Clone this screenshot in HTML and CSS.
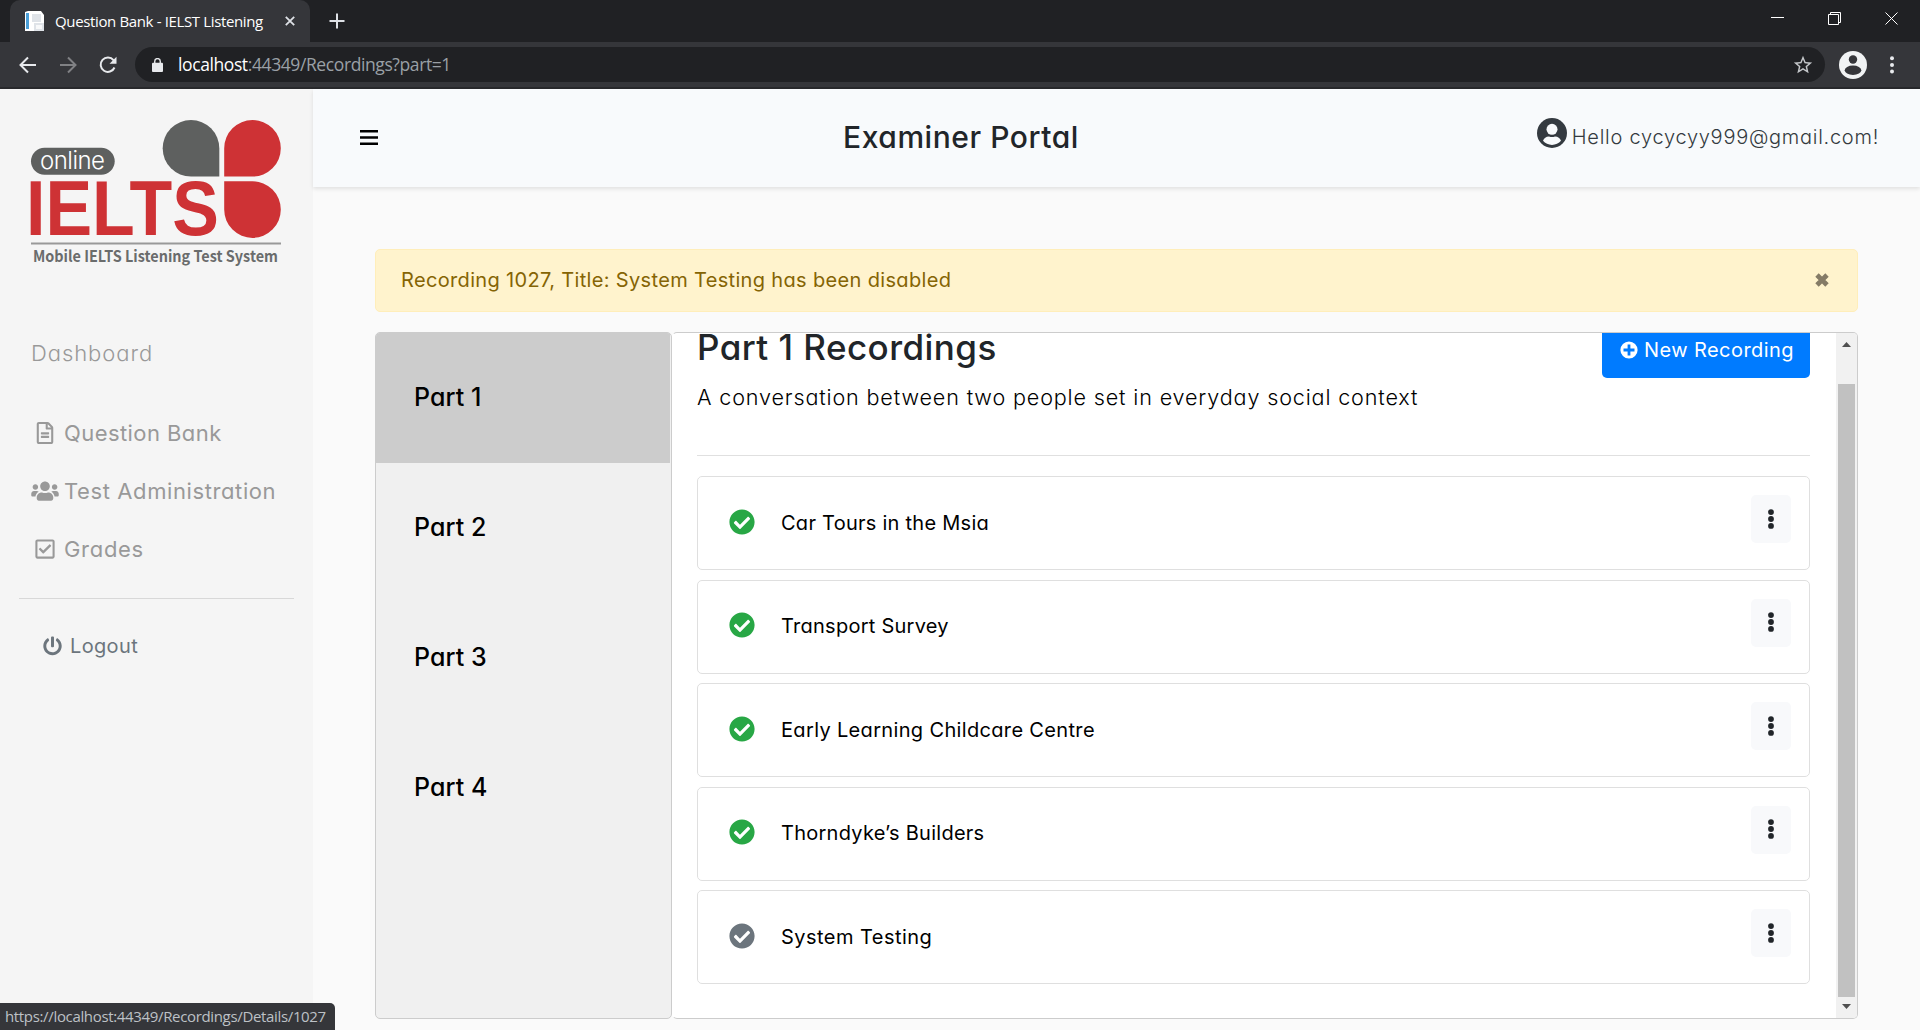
FILE: index.html
```html
<!DOCTYPE html>
<html lang="en">
<head>
<meta charset="utf-8">
<title>Question Bank - IELST Listening</title>
<link rel="stylesheet" href="styles.css">
</head>
<body>
<svg class="defs" aria-hidden="true">
  <symbol id="check-circle" viewBox="0 0 512 512"><path d="M504 256c0 136.967-111.033 248-248 248S8 392.967 8 256 119.033 8 256 8s248 111.033 248 248zM227.314 387.314l184-184c6.248-6.248 6.248-16.379 0-22.627l-22.627-22.627c-6.248-6.249-16.379-6.249-22.628 0L216 308.118l-70.059-70.059c-6.248-6.248-16.379-6.248-22.628 0l-22.627 22.627c-6.248 6.248-6.248 16.379 0 22.627l104 104c6.249 6.249 16.379 6.249 22.628.001z"/></symbol>
  <symbol id="dots" viewBox="0 0 8 20"><circle cx="4" cy="3.1" r="2.9"/><circle cx="4" cy="10" r="2.9"/><circle cx="4" cy="16.9" r="2.9"/></symbol>
</svg>
<header class="browser">
  <div class="tabstrip">
    <div class="tab">
      <svg class="favicon" viewBox="0 0 20 20"><path fill="#fff" d="M0 1 3 0h13l3 4v16H0z"/><path fill="#4a9fd8" d="M1 2h3v16H1z"/><path fill="#dfe3e8" d="M7 3h9v8H7zM9 12h10v8H9z"/><path fill="#f8f9fa" d="M11 14h6v4h-6z"/></svg>
      <span class="tab-title">Question Bank - IELST Listening</span>
      <svg class="tab-close" viewBox="0 0 10 10"><path d="M.8.8l8.4 8.4M9.2.8.8 9.2"/></svg>
    </div>
    <svg class="plus" viewBox="0 0 16 16"><path d="M8 .5v15M.5 8h15"/></svg>
    <div class="window-buttons">
      <svg viewBox="0 0 14 14"><path d="M0 5.5h13"/></svg>
      <svg viewBox="0 0 14 14"><path d="M.5 2.5h10v10H.5zM2.5 2.5v-2h10v10h-2"/></svg>
      <svg viewBox="0 0 14 14"><path d="M.5.5l12 12M12.500.5l-12 12"/></svg>
    </div>
  </div>
  <div class="toolbar">
    <svg class="nav" viewBox="0 0 18 18"><path d="M17 9H2M9 1.500 1.500 9 9 16.500"/></svg>
    <svg class="nav dim" viewBox="0 0 18 18"><path d="M1 9h15M9 1.500 16.500 9 9 16.500"/></svg>
    <svg class="nav" viewBox="0 0 18 18"><path d="M15.500 11.500A7.200 7.200 0 1 1 14.500 4.200L16 6"/><path class="solid" d="M17.500.8v7h-7z"/></svg>
    <div class="address">
      <svg class="lock" viewBox="0 0 12 15"><path fill="#e8eaed" d="M1 5h10q1 0 1 1v8q0 1-1 1H1q-1 0-1-1V6q0-1 1-1z"/><path fill="none" stroke="#e8eaed" stroke-width="1.500" d="M3 6V3.500a3 3 0 0 1 6 0V6"/></svg>
      <span class="url"><b>localhost</b>:44349/Recordings?part=1</span>
      <svg class="star" viewBox="0 0 24 24"><path d="M22 9.240l-7.190-.62L12 2 9.190 8.630 2 9.240l5.460 4.730L5.820 21 12 17.270 18.180 21l-1.630-7.030L22 9.240zM12 15.400l-3.760 2.270 1-4.280-3.320-2.880 4.380-.38L12 6.100l1.710 4.040 4.380.38-3.320 2.880 1 4.280L12 15.400z"/></svg>
    </div>
    <svg class="profile" viewBox="0 0 28 28"><circle cx="14" cy="14" r="14" fill="#f1f3f4"/><circle cx="14" cy="8.500" r="4.200" fill="#35363a"/><ellipse cx="14" cy="19.300" rx="8.300" ry="4.700" fill="#35363a"/></svg>
    <svg class="kebab" viewBox="0 0 4 18"><circle cx="2" cy="2.300" r="2"/><circle cx="2" cy="9" r="2"/><circle cx="2" cy="15.500" r="2"/></svg>
  </div>
</header>

<div class="app">
  <aside class="sidebar">
    <svg class="logo" viewBox="0 0 250 146">
      <path fill="#5e605f" d="M160 0a28.300 28.300 0 0 1 28.300 28.300v28.300H160A28.300 28.300 0 0 1 160 0z"/>
      <path fill="#ce3235" d="M221.500 0a28.300 28.300 0 0 0-28.300 28.300v28.300h28.300a28.300 28.300 0 0 0 0-56.600zM193.200 61.300h28.300a28.300 28.300 0 1 1-28.300 28.300z"/>
      <rect x="0" y="27.700" width="83.700" height="27" rx="13.500" fill="#5e605f"/>
      <text class="logo-online" x="9" y="48.800" textLength="65">online</text>
      <text class="logo-name" x="-5" y="115.200" textLength="193" lengthAdjust="spacingAndGlyphs">IELTS</text>
      <path fill="#999" d="M0 122.500h250v2H0z"/>
      <text class="logo-tag" x="2" y="141.800" textLength="245" lengthAdjust="spacingAndGlyphs">Mobile IELTS Listening Test System</text>
    </svg>
    <nav class="menu">
      <a class="dashboard"><span>Dashboard</span></a>
      <a><svg class="menu-icon" viewBox="-64 0 512 512"><path d="M288 248v28c0 6.600-5.400 12-12 12H108c-6.600 0-12-5.400-12-12v-28c0-6.600 5.400-12 12-12h168c6.600 0 12 5.400 12 12zm-12 72H108c-6.600 0-12 5.400-12 12v28c0 6.600 5.400 12 12 12h168c6.600 0 12-5.400 12-12v-28c0-6.600-5.400-12-12-12zm108-188.100V464c0 26.500-21.500 48-48 48H48c-26.500 0-48-21.500-48-48V48C0 21.500 21.500 0 48 0h204.100C264.800 0 277 5.100 286 14.100L369.900 98c9 8.900 14.100 21.200 14.100 33.900zm-128-80V128h76.100L256 51.900zM336 464V176H232c-13.300 0-24-10.700-24-24V48H48v416h288z"/></svg><span class="l-question">Question Bank</span></a>
      <a><svg class="menu-icon" viewBox="0 0 640 512"><path d="M96 224c35.300 0 64-28.700 64-64s-28.700-64-64-64-64 28.700-64 64 28.700 64 64 64zm448 0c35.300 0 64-28.700 64-64s-28.700-64-64-64-64 28.700-64 64 28.700 64 64 64zm32 32h-64c-17.600 0-33.500 7.100-45.100 18.600 40.300 22.100 68.900 62 75.100 109.400h66c17.700 0 32-14.300 32-32v-32c0-35.300-28.700-64-64-64zm-256 0c61.900 0 112-50.100 112-112S381.900 32 320 32 208 82.100 208 144s50.100 112 112 112zm76.800 32h-8.300c-20.800 10-43.900 16-68.500 16s-47.600-6-68.500-16h-8.300C179.600 288 128 339.600 128 403.200V432c0 26.500 21.500 48 48 48h288c26.500 0 48-21.500 48-48v-28.800c0-63.600-51.600-115.200-115.200-115.200zm-223.700-13.400C161.500 263.100 145.600 256 128 256H64c-35.300 0-64 28.700-64 64v32c0 17.700 14.300 32 32 32h65.900c6.300-47.400 34.900-87.300 75.200-109.400z"/></svg><span class="l-test">Test Administration</span></a>
      <a><svg class="menu-icon" viewBox="-32 0 512 512"><path d="M400 32H48C21.490 32 0 53.490 0 80v352c0 26.510 21.490 48 48 48h352c26.510 0 48-21.490 48-48V80c0-26.510-21.490-48-48-48zm0 400H48V80h352v352zm-35.864-241.724L191.547 361.480c-4.705 4.667-12.303 4.637-16.970-.068l-90.781-91.516c-4.667-4.705-4.637-12.303.069-16.971l22.719-22.536c4.705-4.667 12.303-4.637 16.970.069l59.792 60.277 141.352-140.216c4.705-4.667 12.303-4.637 16.970.068l22.536 22.718c4.667 4.706 4.637 12.304-.068 16.971z"/></svg><span class="l-grades">Grades</span></a>
    </nav>
    <a class="logout"><svg viewBox="0 0 512 512"><path d="M400 54.100c63 45 104 118.600 104 201.900 0 136.800-110.800 247.700-247.500 248C120 504.300 8.200 393 8 256.400 7.900 173.100 48.900 99.300 111.800 54.200c11.700-8.300 28-4.800 35 7.700L162.600 90c5.900 10.500 3.100 23.800-6.600 31-41.500 30.800-68 79.600-68 134.900-.1 92.300 74.500 168.100 168 168.100 91.600 0 168.600-74.200 168-169.100-.3-51.800-24.700-101.800-68.100-134-9.700-7.200-12.400-20.500-6.500-30.900l15.800-28.100c7-12.400 23.200-16.100 34.800-7.800zM296 264V24c0-13.300-10.700-24-24-24h-32c-13.300 0-24 10.700-24 24v240c0 13.300 10.700 24 24 24h32c13.300 0 24-10.700 24-24z"/></svg><span>Logout</span></a>
  </aside>

  <div class="page">
    <header class="topbar">
      <svg class="burger" viewBox="0 0 18 15"><path d="M0 0h18v2.500H0zM0 6.200h18v2.500H0zM0 12.500h18V15H0z"/></svg>
      <h1>Examiner Portal</h1>
      <div class="user"><svg viewBox="0 0 30 30"><circle cx="15" cy="15" r="15"/><circle cx="15" cy="11.300" r="5.500" fill="#f8fafc"/><path fill="#f8fafc" d="M6 22.700q1.500-4 6-4.200 3 1 6 0 4.500.2 6 4.200a11.600 11.600 0 0 1-18 0z"/></svg><span>Hello cycycyy999@gmail.com!</span></div>
    </header>
    <main class="content">
      <div class="alert"><span>Recording 1027, Title: System Testing has been disabled</span><svg viewBox="0 0 14 14"><path d="M2 2l10 10M12 2 2 12"/></svg></div>
      <div class="panels">
        <nav class="parts">
          <a class="active"><span>Part 1</span></a>
          <a><span>Part 2</span></a>
          <a><span>Part 3</span></a>
          <a><span>Part 4</span></a>
        </nav>
        <section class="recordings">
          <div class="scroll-area">
            <div class="intro">
              <div>
                <h2>Part 1 Recordings</h2>
                <p>A conversation between two people set in everyday social context</p>
              </div>
              <a class="new"><svg viewBox="0 0 20 20"><circle cx="10" cy="10" r="10" fill="#fff"/><path d="M10 4.500v11M4.500 10h11"/></svg><span>New Recording</span></a>
            </div>
            <hr>
            <div class="list">
              <div class="card"><svg class="ok"><use href="#check-circle"/></svg><span>Car Tours in the Msia</span><i class="more"><svg><use href="#dots"/></svg></i></div>
              <div class="card"><svg class="ok"><use href="#check-circle"/></svg><span>Transport Survey</span><i class="more"><svg><use href="#dots"/></svg></i></div>
              <div class="card wide"><svg class="ok"><use href="#check-circle"/></svg><span>Early Learning Childcare Centre</span><i class="more"><svg><use href="#dots"/></svg></i></div>
              <div class="card"><svg class="ok"><use href="#check-circle"/></svg><span>Thorndyke’s Builders</span><i class="more"><svg><use href="#dots"/></svg></i></div>
              <div class="card wider"><svg class="ok off"><use href="#check-circle"/></svg><span>System Testing</span><i class="more"><svg><use href="#dots"/></svg></i></div>
            </div>
          </div>
          <div class="scrollbar">
            <svg viewBox="0 0 9 5"><path d="M0 5h9L4.500 0z"/></svg>
            <div class="thumb"></div>
            <svg viewBox="0 0 9 5"><path d="M0 0h9L4.500 5z"/></svg>
          </div>
        </section>
      </div>
    </main>
  </div>
</div>
<div class="status">https://localhost:44349/Recordings/Details/1027</div>
</body>
</html>
```
FILE: styles.css
```css
* { box-sizing: border-box; }
body { margin: 0; height: 1030px; overflow: hidden; display: flex; flex-direction: column; background: #fafafa; font-family: Inter, "Noto Sans", sans-serif; font-feature-settings: "cv11"; color: #212529; font-size: 20px; }
svg { display: block; flex: none; }
span, h1, h2, p { white-space: nowrap; }
.defs { position: absolute; width: 0; height: 0; }

/* Browser chrome */
.browser { flex: none; height: 89px; background: #35363a; border-bottom: 2px solid #28292c; font-family: "Open Sans", "Noto Sans", sans-serif; font-feature-settings: normal; }
.tabstrip { height: 42px; background: #202124; display: flex; align-items: center; padding-left: 10px; }
.tab { width: 300px; height: 42px; background: #35363a; border-radius: 10px 10px 0 0; display: flex; align-items: center; padding: 0 15px; color: #fff; font-size: 15px; letter-spacing: -.55px; }
.favicon { width: 20px; height: 20px; margin-right: 10px; }
.tab-title { width: 230px; letter-spacing: -.36px; padding-bottom: 1px; }
.tab-close { width: 10px; height: 10px; }
.tab-close path, .plus path { stroke: #dee1e6; stroke-width: 1.800; fill: none; }
.plus { width: 16px; height: 16px; margin-left: 19px; }
.plus path { stroke-width: 2; }
.window-buttons { margin-left: auto; padding: 0 21px 5px 0; display: flex; gap: 43px; }
.window-buttons svg { width: 14px; height: 14px; fill: none; stroke: #fff; stroke-width: 1; }
.toolbar { height: 45px; display: flex; align-items: center; padding-left: 19px; }
.nav { width: 18px; height: 18px; margin-right: 22px; fill: none; stroke: #e8eaed; stroke-width: 2; }
.nav .solid { fill: #e8eaed; stroke: none; }
.nav.dim { stroke: #808184; }
.address { width: 1690px; height: 35px; margin-left: -4px; border-radius: 18px; background: #202124; display: flex; align-items: center; padding: 0 11px 0 17px; font-size: 17.500px; color: #9aa0a6; }
.lock { width: 11px; height: 14px; margin-right: 15px; }
.url { letter-spacing: -.4px; padding-bottom: 1px; }
.url b { color: #fff; font-weight: 400; }
.star { width: 22px; height: 22px; margin-left: auto; fill: #c4c7ca; }
.profile { width: 28px; height: 28px; margin-left: 14px; }
.kebab { width: 4px; height: 18px; margin-left: 23px; fill: #e8eaed; }

/* Sidebar */
.app { flex: 1; display: flex; min-height: 0; }
.sidebar { width: 313px; flex: none; background: #f5f5f5; padding-top: 31px; }
.logo { width: 250px; height: 146px; margin-left: 31px; overflow: visible; }
.logo-online { font: 300 24px Inter, sans-serif; fill: #fff; }
.logo-name { font: bold 77px "Liberation Sans", sans-serif; fill: #ce3235; }
.logo-tag { font: bold 15.500px "Noto Sans CJK SC", sans-serif; fill: #6a6c6c; }
.menu { margin-left: 31px; color: #999; font-size: 22px; padding-top: 72px; }
.menu a { height: 58px; display: flex; align-items: center; gap: 5px; }
.menu .dashboard { height: 30px; margin-bottom: 36px; font-weight: 300; letter-spacing: .93px; }
.menu-icon { width: 28px; height: 22px; fill: #999; }
.l-question { letter-spacing: .43px; }
.l-test { letter-spacing: .6px; }
.l-grades { letter-spacing: .7px; }
.logout { display: flex; align-items: center; gap: 8px; height: 30px; margin: 53px 0 0 43px; color: #6c757d; letter-spacing: .35px; position: relative; }
.logout::before { content: ""; position: absolute; left: -24px; top: -33px; width: 275px; height: 1px; background: #d8d8d8; }
.logout svg { width: 19px; height: 20px; fill: #6c757d; }

/* Top bar */
.page { flex: 1; min-width: 0; }
.topbar { height: 98px; background: #f8fafc; box-shadow: 0 2px 4px rgba(0,0,0,.1); display: flex; align-items: center; padding: 0 41px 2px 47px; }
.burger { width: 18px; height: 15px; }
h1 { margin: 0 0 0 465px; font-size: 30px; font-weight: 500; letter-spacing: .56px; }
.user { margin-left: auto; display: flex; align-items: center; gap: 5px; font-weight: 300; color: #343a40; letter-spacing: .73px; }
.user svg { width: 30px; height: 30px; margin-top: -9px; fill: #343a40; }

/* Content */
.content { padding: 62px 62px 0; }
.alert { height: 63px; background: #fff3cd; border: 1px solid #ffeeba; border-radius: 5px; display: flex; align-items: center; justify-content: space-between; padding: 0 28px 2px 25px; color: #856404; letter-spacing: .34px; }
.alert svg { width: 14px; height: 14px; stroke: #857b66; stroke-width: 4.800; }
.panels { margin-top: 20px; height: 687px; display: flex; }
.parts { width: 297px; flex: none; border: 1px solid #ccc; border-radius: 5px; overflow: hidden; background: #f0f0f0; color: #000; font-size: 25px; font-weight: 500; letter-spacing: .1px; }
.parts a { height: 130px; display: flex; align-items: center; padding: 0 0 3px 38px; }
.parts .active { background: #ccc; margin-right: 1px; }
.recordings { flex: 1; display: flex; border: 1px solid #ccc; border-left-color: #fff; border-radius: 5px; overflow: hidden; background: #fff; }
.scroll-area { flex: 1; min-width: 0; padding: 0 26px 0 24px; }
.intro { display: flex; justify-content: space-between; height: 122px; color: #000; }
h2 { margin: -7px 0 0; line-height: 42px; font-size: 35px; font-weight: 500; color: #212529; letter-spacing: .45px; }
p { margin: 14px 0 0; line-height: 30px; font-size: 21.600px; font-weight: 300; letter-spacing: .84px; }
.new { width: 208px; height: 45px; background: #007bff; border-radius: 0 0 5px 5px; color: #fff; display: flex; align-items: center; gap: 5px; padding: 0 0 12px 17px; letter-spacing: .42px; }
.new svg { width: 20px; height: 20px; stroke: #007bff; stroke-width: 2.800; }
hr { margin: 0; border: 0; height: 1px; background: #e0e0e0; }
.list { margin-top: 20px; display: flex; flex-direction: column; gap: 9.500px; color: #000; letter-spacing: .26px; }
.card { height: 94px; border: 1px solid #dfdfdf; border-radius: 5px; display: flex; align-items: center; padding: 0 18px 1px 31px; }
.card.wide { letter-spacing: .34px; }
.card.wider { letter-spacing: .46px; }
.ok { width: 26px; height: 26px; fill: #28a745; margin-right: 26px; margin-top: -2px; }
.ok.off { fill: #6c757d; }
.more { margin: -7px 0 0 auto; width: 40px; height: 48px; border-radius: 5px; background: #f8f9fb; display: flex; align-items: center; justify-content: center; fill: #212529; }
.more svg { width: 8px; height: 20px; margin-top: -1px; }
.scrollbar { width: 21px; background: #f1f1f1; display: flex; flex-direction: column; align-items: center; padding: 9px 0; }
.scrollbar svg { width: 9px; height: 5px; fill: #505050; }
.thumb { width: 17px; height: 613px; margin: 37px 0 auto; background: #c1c1c1; }

/* Link target preview in the window corner */
.status { position: absolute; left: 0; top: 1003px; width: 335px; height: 27px; background: #35363a; border-radius: 0 5px 0 0; color: #bdc1c6; font: 15px/26px "Open Sans", sans-serif; font-feature-settings: normal; letter-spacing: -.34px; padding-left: 5px; }
```
